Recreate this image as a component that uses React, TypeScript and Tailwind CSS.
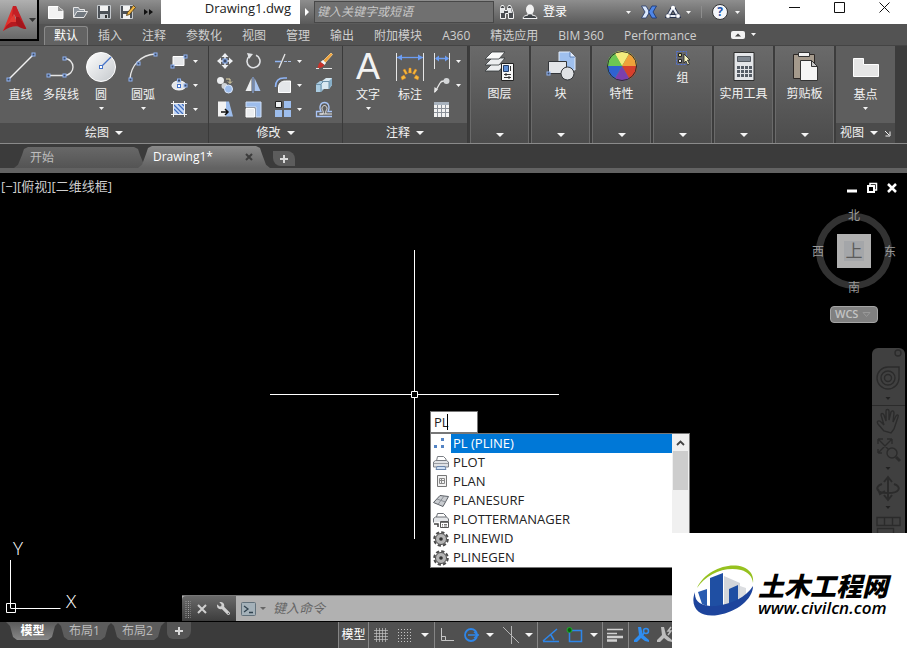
import { useState } from "react";
import type { ReactNode } from "react";
import { clsx } from "clsx";
import { FaWrench } from "react-icons/fa";

interface IconProps {
   w?: number;
   h?: number;
   className?: string;
   children: ReactNode;
}

function Icon({ w = 18, h = 18, className, children }: IconProps) {
   return (
      <svg
         width={w}
         height={h}
         viewBox={`0 0 ${w} ${h}`}
         fill="none"
         aria-hidden="true"
         className={clsx("shrink-0", className)}>
         {children}
      </svg>
   );
}

function Caret({ big = false, className }: { big?: boolean; className?: string }) {
   return big ? (
      <Icon w={8} h={4} className={className}>
         <path d="M0 0h8L4 4z" fill="#f4f4f4" />
      </Icon>
   ) : (
      <Icon w={5} h={3} className={className}>
         <path d="M0 0h5L2.5 3z" fill="#f4f4f4" />
      </Icon>
   );
}

// Small blue grip square, centred on x / y
function Grip({ x, y }: { x: number; y: number }) {
   return (
      <rect x={x - 1.5} y={y - 1.5} width="3" height="3" fill="#3d4a63" stroke="#8fb4f5" />
   );
}

/* ---------- Draw panel ---------- */

const lineIcon = (
   <Icon w={32} h={32}>
      <path d="M4 28L28 4" stroke="#f2f2f2" strokeWidth="1.4" />
      <Grip x={3.5} y={28.5} />
      <Grip x={28.5} y={3.5} />
   </Icon>
);

const polylineIcon = (
   <Icon w={32} h={32}>
      <path d="M3 24.5H19c12 0 12-17 0-17" stroke="#e6e6e6" strokeWidth="1.4" />
      <Grip x={3.5} y={24.5} />
      <Grip x={19.5} y={24.5} />
      <Grip x={19.5} y={7.5} />
   </Icon>
);

const circleIcon = (
   <Icon w={32} h={32}>
      <circle cx="16" cy="16" r="14.5" fill="url(#disc)" stroke="#fff" />
      <defs>
         <linearGradient id="disc" x1="0" y1="0" x2="1" y2="1">
            <stop offset="0" stopColor="#fff" />
            <stop offset="1" stopColor="#c4c8cc" />
         </linearGradient>
      </defs>
      <path d="M16 16L26 6" stroke="#4573c9" strokeWidth="1.3" />
      <rect x="14.5" y="14.5" width="3" height="3" fill="#fff" stroke="#4573c9" />
   </Icon>
);

const arcIcon = (
   <Icon w={32} h={32}>
      <path d="M3 28C4 14 14 4 28 3" stroke="#e6e6e6" strokeWidth="1.4" />
      <Grip x={3.5} y={28.5} />
      <Grip x={11.5} y={12.5} />
      <Grip x={28.5} y={3.5} />
   </Icon>
);

const rectIcon = (
   <Icon>
      <path d="M3 4.5h11v9H3z" fill="#e4e6e9" stroke="#fff" />
      <Grip x={2.5} y={14.5} />
      <Grip x={15.5} y={4.5} />
   </Icon>
);

const ellipseIcon = (
   <Icon>
      <ellipse cx="9" cy="9.5" rx="7" ry="4.5" fill="#e4e6e9" stroke="#fff" />
      <rect x="7.5" y="8.5" width="3" height="3" fill="#fff" stroke="#4573c9" />
      <Grip x={9} y={4.5} />
      <Grip x={15.5} y={9.5} />
   </Icon>
);

const hatchIcon = (
   <Icon>
      <path d="M4 4h10v10H4z" fill="#c3d6f5" />
      <path d="M4 9l5 5M4 5l9 9M8 4l6 6M12 4l2 2" stroke="#3f6dbd" strokeWidth="1.2" />
      <path d="M3.500 1v16M14.500 1v16M1 3.500h16M1 14.500h16" stroke="#f2f2f2" />
   </Icon>
);

/* ---------- Modify panel ---------- */

const moveIcon = (
   <Icon>
      <path d="M9 1l3.500 4h-7zM9 17l3.500-4h-7zM1 9l4-3.500v7zM17 9l-4-3.500v7z" fill="#eef0f3" />
      <path d="M9 3v4M9 11v4M3 9h4M11 9h4" stroke="#eef0f3" strokeWidth="1.500" />
      <rect x="7" y="7" width="4" height="4" fill="#3d4a63" stroke="#8fb4f5" />
   </Icon>
);

const rotateIcon = (
   <Icon>
      <path d="M5 4.500A6.500 6.500 0 1 0 12 3.200" stroke="#e0e2e5" strokeWidth="1.600" />
      <path d="M3 1l6 1-4 5z" fill="#e0e2e5" />
   </Icon>
);

const trimIcon = (
   <Icon>
      <path d="M1 9.500h6" stroke="#8fb4f5" strokeWidth="1.500" />
      <path d="M5 16l6-14" stroke="#e6e6e6" strokeWidth="1.300" />
      <path d="M10 9.500h8" stroke="#a9bde0" strokeWidth="1.200" strokeDasharray="3 1" />
   </Icon>
);

const eraseIcon = (
   <Icon>
      <path d="M16 1l1.500 1.500L10 11 8 9z" fill="#f0a13a" stroke="#f6cf8a" strokeWidth=".8" />
      <path d="M8 8l3 3-1.500 2-4-3z" fill="#f4f4f4" />
      <path d="M5.500 10l4 3c-2 2.500-4 3-7 3 1-3 1-5 3-6z" fill="#c9322a" />
      <path d="M1 16.500h3M8 16.500h9" stroke="#e6e6e6" />
   </Icon>
);

const copyIcon = (
   <Icon>
      <circle cx="4.500" cy="4.500" r="3.500" fill="#eceef0" />
      <circle cx="8.500" cy="10" r="3" fill="#d0d4d8" />
      <circle cx="12.500" cy="13" r="4" fill="#9dbdec" stroke="#dbe7fa" />
      <path d="M10 3h4v4M12 5.500l2 2 2-2" stroke="#e6d9a8" />
   </Icon>
);

const mirrorIcon = (
   <Icon>
      <path d="M7.500 2v13H1.500z" fill="#eceef0" />
      <path d="M10.500 2v13h6z" fill="#a9c4ee" />
      <path d="M9 1v16" stroke="#8fb4f5" />
   </Icon>
);

const filletIcon = (
   <Icon>
      <path d="M4.500 16.500V12c0-5 3-7 7-7h5v11.500z" fill="#e4e6e9" stroke="#fff" />
      <path d="M1.500 11C1.500 5 5 2 10 2h3" stroke="#8fb4f5" strokeWidth="1.600" />
   </Icon>
);

const explodeIcon = (
   <Icon>
      <path d="M1 8l4-3h4v8l-3 3H1z" fill="#a9cbe0" />
      <path d="M7 5l4-3h6v7l-3 4H7z" fill="#d9e9f2" />
      <path d="M14 5l3-3v7l-3 4z" fill="#86aec8" />
      <path d="M1 8.500h5V16M7 5.500h7V13M6 8l2-2" stroke="#6d93ab" />
   </Icon>
);

const stretchIcon = (
   <Icon>
      <path d="M2 1.500h8v15H2z" fill="#f2f2f2" />
      <path d="M10 1.500h3l4 15h-7z" fill="#9dbdec" />
      <path d="M5 12h6M9 9l3 3-3 3" stroke="#111" strokeWidth="1.500" />
   </Icon>
);

const scaleIcon = (
   <Icon>
      <path d="M2 2h15v15h-5V7H2z" fill="#9dbdec" stroke="#cfdff7" />
      <path d="M2 8.500h8.500V17H2z" fill="#eceef0" stroke="#fff" />
   </Icon>
);

const arrayIcon = (
   <Icon>
      <path d="M1.500 1.500h6v6h-6z" fill="#eceef0" stroke="#222" />
      <path d="M10 1h7v7h-7zM1 10h7v7H1zM10 10h7v7h-7z" fill="#9dbdec" />
   </Icon>
);

const offsetIcon = (
   <Icon>
      <path
         d="M17 16.500H1.500v-5H6C3.500 6 6 2.500 9.500 2.500S15.500 6 13 11.500h4"
         stroke="#a9c4f5"
         strokeWidth="1.300"
      />
      <path
         d="M17 14H4.500M4.500 14H8c1-3-1-4-1-5.500S8.200 5.500 9.500 5.500 12 7 12 8.500 10 11 11 14"
         stroke="#e8e8e8"
      />
   </Icon>
);

/* ---------- Annotation panel ---------- */

const dimensionIcon = (
   <Icon w={32} h={32}>
      <path d="M2.500 2v28M29.500 2v28" stroke="#e6e6e6" />
      <path d="M3 6.500h26" stroke="#6c9df2" strokeWidth="1.300" />
      <path d="M3 6.500l5-3v6zM29 6.500l-5-3v6z" fill="#6c9df2" />
      <path
         d="M15 17h2l.5 5h-3zM9 19l2-1 2.500 4.500-2 1zM23 19l-2-1-2.500 4.500 2 1zM7 26l3-2 2 3-4 2zM25 26l-3-2-2 3 4 2z"
         fill="#f6b93b"
         stroke="#e0801c"
         strokeWidth=".4"
      />
   </Icon>
);

const linearIcon = (
   <Icon>
      <path d="M1.500 1v16M16.500 1v16" stroke="#e6e6e6" />
      <path d="M3 6.500h12" stroke="#6c9df2" strokeWidth="1.500" />
      <path d="M2 6.500l4-3v6zM16 6.500l-4-3v6z" fill="#6c9df2" />
   </Icon>
);

const leaderIcon = (
   <Icon>
      <path d="M2 16l5-9c1-2 2-2 4-2" stroke="#e6e6e6" strokeWidth="1.300" />
      <path d="M1 17l.5-6 3.500 2.500z" fill="#e6e6e6" />
      <circle cx="13.500" cy="5" r="3" fill="#d4d6d8" />
   </Icon>
);

const tableIcon = (
   <Icon>
      <path d="M1 2h15v15H1z" fill="#f2f2f2" />
      <path d="M1 2h15v3H1z" fill="#a8b2bd" />
      <path d="M1 8.500h15M1 12.500h15M4.500 5v12M8.500 5v12M12.500 5v12" stroke="#8a9098" />
   </Icon>
);

/* ---------- Collapsed panels ---------- */

const layersIcon = (
   <Icon w={32} h={32}>
      <path d="M8 14h13l-6 7H1z" fill="#eceef0" stroke="#34373a" strokeWidth=".8" />
      <path d="M8 8h13l-6 7H1z" fill="#eceef0" stroke="#34373a" strokeWidth=".8" />
      <path d="M8 2h13l-6 7H1z" fill="#fafafa" stroke="#34373a" strokeWidth=".8" />
      <path d="M17.500 13.500h12v17h-12z" fill="#f7f7f7" stroke="#222" />
      <path d="M19.500 15.500h5v6h-5z" fill="#5e8fd6" stroke="#223c66" />
      <path d="M26.500 16v5M20 24.500h7M20 27.500h7M22 23v3M25 26v3" stroke="#333" />
   </Icon>
);

const blockIcon = (
   <Icon w={32} h={32}>
      <path d="M14 2h11l5 5v13H14z" fill="#9fc0ee" stroke="#e3edfb" />
      <path d="M25 2v5h5" fill="#dfeafb" stroke="#4a6fa8" strokeWidth=".8" />
      <path d="M3.500 11.500h18v12h-18z" fill="#e4e6e9" stroke="#33363a" />
      <circle cx="22.500" cy="23.500" r="6.500" fill="#dfe1e4" stroke="#33363a" />
      <Grip x={3.5} y={23.5} />
   </Icon>
);

const wheelIcon = (
   <Icon w={32} h={32}>
      <circle cx="16" cy="16" r="15" fill="#53b848" />
      <path d="M16 16L8.500 3a15 15 0 0 1 15 0z" fill="#f3ec7c" />
      <path d="M16 16l7.500-13A15 15 0 0 1 31 16z" fill="#f0a23a" />
      <path d="M16 16h15a15 15 0 0 1-7.500 13z" fill="#d8402c" />
      <path d="M16 16l7.500 13a15 15 0 0 1-15 0z" fill="#7b3fae" />
      <path d="M16 16L8.500 29A15 15 0 0 1 1 16z" fill="#2f62d0" />
      <path d="M16 16H1A15 15 0 0 1 8.500 3z" fill="#6cc653" />
      <circle cx="16" cy="16" r="14.500" stroke="#2d2d2d" />
   </Icon>
);

const groupIcon = (
   <Icon w={16} h={16}>
      <path d="M1.500 1.500h10v13h-10z" stroke="#5273d6" strokeDasharray="2 1" />
      <path d="M3.500 3.500h3v3h-3z" fill="#e6e08a" stroke="#222" />
      <path d="M3.500 9.500h3v3h-3z" fill="#e4e4e4" stroke="#222" />
      <path d="M9 4v9l2-2 1.500 4 2-1-2-4H15z" fill="#f7f4c0" stroke="#222" strokeWidth=".8" />
   </Icon>
);

const calcIcon = (
   <Icon w={32} h={32}>
      <path d="M6 2.500h20v28H6z" fill="#e4e6e9" stroke="#2d2d2d" />
      <path d="M9.500 6.500h13v5h-13z" fill="#7f8790" stroke="#555b62" />
      <path
         d="M9 16h3v3H9zM13 16h3v3h-3zM17 16h3v3h-3zM21 16h3v3h-3zM9 20h3v3H9zM13 20h3v3h-3zM17 20h3v3h-3zM21 20h3v3h-3zM9 24h3v3H9zM13 24h3v3h-3zM17 24h3v3h-3zM21 24h3v3h-3z"
         fill="#565d66"
      />
   </Icon>
);

const clipboardIcon = (
   <Icon w={32} h={32}>
      <path d="M4.500 4.500h21v24h-21z" fill="#a59a8c" stroke="#2d2826" />
      <path d="M9.500 2.500h11v4h-11z" fill="#f2f2f2" stroke="#333" />
      <path d="M11.500 10.500h11l6 6v14h-17z" fill="#f5f5f5" stroke="#333" />
      <path d="M22.500 10.500v6h6z" fill="#c8c8c8" stroke="#333" />
   </Icon>
);

const baseIcon = (
   <Icon w={32} h={32}>
      <path d="M3.500 7.500h10v6h15v12h-25z" fill="#e6e6e6" stroke="#fff" />
   </Icon>
);

/* ---------- Command suggestions ---------- */

const dotsIcon = (
   <Icon w={16} h={16}>
      <path d="M8 2h3v3H8zM1 9h3v3H1zM8 9h3v3H8z" fill="#5484c4" />
   </Icon>
);

const printerIcon = (
   <Icon w={16} h={16}>
      <path d="M3.500 6l1-4.500h6L13 4v2" fill="#fff" stroke="#7b7f85" />
      <path d="M.5 7l2-1.500h11l2 1.500v5H.5z" fill="#e0e2e5" stroke="#7b7f85" />
      <path d="M1 8.500h14" stroke="#9a9ea4" />
      <path d="M4 11.500h8l1 3H3z" fill="#cfe0f5" stroke="#6b86ab" />
   </Icon>
);

const planIcon = (
   <Icon w={16} h={16}>
      <path d="M4.500 1.500h9v11h-9z" fill="#f2f2f2" stroke="#777" />
      <path d="M6.500 4.500h5v5h-5zM6.500 6.500h5M8.500 5v4" stroke="#888" />
   </Icon>
);

const surfaceIcon = (
   <Icon w={16} h={16}>
      <path d="M.5 9.500L7 2.500l8.500 1L10 13.500z" fill="#c9ccd0" stroke="#5c6066" />
      <path d="M4 6l8.500 3M11 3L5 11.500" stroke="#8b9097" />
   </Icon>
);

const plotterIcon = (
   <Icon w={16} h={16}>
      <path d="M3.500 5l1-3.500h6L13 4v1" fill="#fff" stroke="#6b6f75" />
      <path d="M.5 10.500v-4l2-1.500h11l2 2v2" fill="#e4e6e9" stroke="#6b6f75" />
      <path d="M1 12h4v3" stroke="#444" strokeWidth="1.500" />
      <path d="M7.500 9.500h8v6h-8z" fill="#fff" stroke="#555" />
      <path d="M8 10.500h7M9 12.500h1M11 12.500h3M9 14h1M11 14h3" stroke="#777" />
   </Icon>
);

const gearIcon = (
   <Icon w={16} h={16}>
      <circle
         cx="8"
         cy="8"
         r="6.800"
         stroke="#4c4c4c"
         strokeWidth="2"
         strokeDasharray="3.300 2.040"
      />
      <circle cx="8" cy="8" r="5.500" fill="#b4b4b4" stroke="#4c4c4c" />
      <circle cx="8" cy="8" r="1.800" fill="#333" />
   </Icon>
);

const suggestions = [
   { label: "PL (PLINE)", icon: dotsIcon },
   { label: "PLOT", icon: printerIcon },
   { label: "PLAN", icon: planIcon },
   { label: "PLANESURF", icon: surfaceIcon },
   { label: "PLOTTERMANAGER", icon: plotterIcon },
   { label: "PLINEWID", icon: gearIcon },
   { label: "PLINEGEN", icon: gearIcon },
];

const ribbonTabs = [
   "默认",
   "插入",
   "注释",
   "参数化",
   "视图",
   "管理",
   "输出",
   "附加模块",
   "A360",
   "精选应用",
   "BIM 360",
   "Performance",
];

const collapsedPanels = [
   { label: "图层", icon: layersIcon },
   { label: "块", icon: blockIcon },
   { label: "特性", icon: wheelIcon },
   { label: "组", icon: groupIcon },
   { label: "实用工具", icon: calcIcon },
   { label: "剪贴板", icon: clipboardIcon },
];

const barGradient = "bg-linear-to-b from-[#8e8e8e] to-[#5a5a5a]";

function TitleBar() {
   return (
      <div className={clsx("flex h-6 items-stretch", barGradient)}>
         <div className="flex items-center gap-2 pr-2 pl-[9px]">
            <button aria-label="新建">
               <Icon w={16} h={14}>
                  <path d="M.5 1.500H10l5 4v8H.5z" fill="#f2f2f2" stroke="#fff" />
                  <path d="M10 1v5h5z" fill="#9a9a9a" />
               </Icon>
            </button>
            <button aria-label="打开">
               <Icon w={16} h={14}>
                  <path d="M1.500 12V2.500h5l1 2h5V7" fill="#8c949c" stroke="#e8e8e8" />
                  <path d="M1.500 12.500L5 6.500h10.500L12 12.500z" fill="#70777e" stroke="#e8e8e8" />
               </Icon>
            </button>
            <button aria-label="保存">
               <Icon w={16} h={14}>
                  <path d="M1.500.5h13v13h-13z" fill="#4c5157" stroke="#c4c8cc" />
                  <path d="M4 1h8v5H4z" fill="#f2f2f2" />
                  <path d="M4 9h8v5H4z" fill="#c8ccd0" />
                  <path d="M9 10h2v3H9z" fill="#333" />
               </Icon>
            </button>
            <button aria-label="另存为">
               <Icon w={16} h={14}>
                  <path d="M.5.5h12v13H.5z" fill="#4c5157" stroke="#c4c8cc" />
                  <path d="M3 1h7v5H3zM3 9h7v5H3z" fill="#f2f2f2" />
                  <path d="M13.500.5l2 2-6 7-3 1 1-3z" fill="#f0b545" stroke="#4a3510" strokeWidth=".8" />
               </Icon>
            </button>
            <button aria-label="更多">
               <Icon w={9} h={6}>
                  <path d="M0 0l4 3-4 3zM5 0l4 3-4 3z" fill="#111" />
               </Icon>
            </button>
         </div>
         <h1 className="w-[139px] bg-white pr-[9px] text-right text-[13px] leading-4 text-[#222]">
            Drawing1.dwg
         </h1>
         <div className="flex w-[14px] items-center justify-center">
            <Icon w={4} h={8}>
               <path d="M0 0l4 4-4 4z" fill="#fff" />
            </Icon>
         </div>
         <input
            aria-label="搜索"
            placeholder="键入关键字或短语"
            className="my-px w-[180px] border border-[#484848] bg-[#707070] px-[2px] text-xs italic outline-none placeholder:text-[#c8c8c8]"
         />
         <div className="flex flex-1 items-center pr-[5px] pl-1">
            <Icon w={16} h={16}>
               <path d="M2.500 3.500l1-2h2l1 2v3h3v-3l1-2h2l1 2 2 6v5h-5v-5h-3v5h-5v-5z" fill="#4a4d51" stroke="#f4f4f4" />
               <path d="M3 4h3v5H2zM10 4h3l1 5h-4z" fill="#e6e8ea" />
            </Icon>
            <Icon w={16} h={16} className="ml-2">
               <path d="M1 14.500c0-2 2-3 5-3.500v-2h4v2c3 .5 5 1.500 5 3.500z" fill="#3f4347" stroke="#f4f4f4" />
               <ellipse cx="8" cy="5.500" rx="4" ry="5" fill="#f2f2f2" />
            </Icon>
            <button className="ml-[5px] text-xs text-white">登录</button>
            <Caret className="mr-[10px] ml-auto" />
            <Icon w={16} h={14}>
               <path d="M.5 1H5l3.500 6L5 13H.5L4 7z" fill="#dbe8fc" stroke="#22376b" strokeWidth=".8" />
               <path d="M15.500 1H11L7.500 7l3.500 6h4.500L12 7z" fill="#4f86e6" stroke="#17306b" strokeWidth=".8" />
            </Icon>
            <Icon w={16} h={14} className="ml-2">
               <path d="M8 2.500l5 8.500H3z" stroke="#26304a" strokeWidth="4" />
               <path d="M8 2.500l5 8.500H3z" stroke="#e8edf6" strokeWidth="2.200" />
               <circle cx="8" cy="2.500" r="2" fill="#fff" />
               <circle cx="3" cy="11" r="2.300" fill="#fff" stroke="#3a4560" strokeWidth=".6" />
               <circle cx="13" cy="11" r="2.300" fill="#fff" stroke="#3a4560" strokeWidth=".6" />
            </Icon>
            <Caret className="ml-[5px]" />
            <span className="mx-[10px] h-3 w-px bg-[#8d8d8d]" />
            <button
               aria-label="帮助"
               className="flex size-4 items-center justify-center rounded-full border border-[#333] bg-[#f4f6fa] text-xs font-bold text-[#2453a8]">
               ?
            </button>
            <Caret className="ml-[7px]" />
         </div>
         <div className="flex bg-white pl-[27px] text-[#111]">
            <button aria-label="最小化" className="flex w-[45px] justify-center pt-[2px]">
               <Icon w={11} h={11}>
                  <path d="M0 5.500h11" stroke="currentColor" />
               </Icon>
            </button>
            <button aria-label="最大化" className="flex w-[45px] justify-center pt-[2px]">
               <Icon w={11} h={11}>
                  <path d="M.5.5h10v10H.5z" stroke="currentColor" />
               </Icon>
            </button>
            <button aria-label="关闭" className="flex w-[45px] justify-center pt-[2px]">
               <Icon w={11} h={11}>
                  <path d="M.5.5l10 10M10.500.5l-10 10" stroke="currentColor" />
               </Icon>
            </button>
         </div>
      </div>
   );
}

function Header() {
   const [active, setActive] = useState("默认");

   return (
      <header className="flex bg-[#535353]">
         <button
            aria-label="应用程序菜单"
            className="flex h-[41px] w-[39px] shrink-0 items-center gap-px border-r-2 border-b-2 border-black bg-linear-to-b from-[#b0b0b0] to-[#686868] pl-[2px]">
            <Icon w={26} h={28}>
               <path d="M11 0h3l5 13-5-2-2-3-7 14-4 3z" fill="#e0302b" />
               <path d="M11 0h3l10 22-4-1-8-13-2 4z" fill="#c41f25" />
               <path d="M12 8l-7 11-4 6c3-3 7-5 11-5l3-3z" fill="#e23a33" />
               <path d="M9 16h7l3 5c-6-2-12 0-18 4l4-6z" fill="#b5191f" />
               <path d="M14 11l3 0 7 11c1 1-1 2-7-1l-3-4z" fill="#a3151b" />
            </Icon>
            <Icon w={7} h={4}>
               <path d="M0 0h7L3.500 4z" fill="#333" />
            </Icon>
         </button>
         <div className="min-w-0 flex-1">
            <TitleBar />
            <nav className="flex h-[21px] items-stretch pl-[5px]">
               {ribbonTabs.map((tab) => (
                  <button
                     key={tab}
                     onClick={() => setActive(tab)}
                     className={clsx(
                        "text-xs whitespace-nowrap",
                        tab === active
                           ? "mt-[2px] rounded-t-[3px] border border-b-0 border-[#8a8a8a] bg-[#636363] px-[9px] text-white"
                           : "px-[10px] pt-[2px] text-[#cfcfcf]"
                     )}>
                     {tab}
                  </button>
               ))}
               <button aria-label="最小化功能区" className="ml-6 flex items-center gap-[6px]">
                  <Icon w={14} h={9}>
                     <rect width="14" height="8" rx="2" y="1" fill="#f2f2f2" />
                     <path d="M4 6.500h6L7 3.500z" fill="#444" />
                  </Icon>
                  <Caret />
               </button>
            </nav>
         </div>
      </header>
   );
}

interface BigButtonProps {
   icon: ReactNode;
   label: string;
   caret?: boolean;
   className: string;
}

function BigButton({ icon, label, caret, className }: BigButtonProps) {
   return (
      <button className={clsx("flex flex-col items-center pt-[2px]", className)}>
         {icon}
         <span className="mt-1 leading-4 whitespace-nowrap">{label}</span>
         {caret && <Caret className="mt-1" />}
      </button>
   );
}

function SmallButton({ icon, label, caret }: { icon: ReactNode; label: string; caret?: boolean }) {
   return (
      <button aria-label={label} className="flex h-6 items-center gap-[5px]">
         {icon}
         {caret && <Caret />}
      </button>
   );
}

function Panel({ title, children }: { title: string; children: ReactNode }) {
   return (
      <section className="flex flex-col border-r border-[#3a3a3a] bg-[#5e5e5e]">
         <div className="flex flex-1 items-start pt-[3px]">{children}</div>
         <button className="flex h-5 items-center justify-center gap-[6px] bg-[#4b4b4b]">
            {title}
            <Caret big />
         </button>
      </section>
   );
}

function Ribbon() {
   return (
      <div className="flex h-[98px] items-stretch border-t border-[#444] bg-[#3c3c3c] text-xs text-[#f2f2f2]">
         <Panel title="绘图">
            <BigButton icon={lineIcon} label="直线" className="w-[41px]" />
            <BigButton icon={polylineIcon} label="多段线" className="w-10" />
            <BigButton icon={circleIcon} label="圆" caret className="w-10" />
            <BigButton icon={arcIcon} label="圆弧" caret className="w-[44px]" />
            <div className="flex flex-col pr-[10px] pl-[5px]">
               <SmallButton icon={rectIcon} label="矩形" caret />
               <SmallButton icon={ellipseIcon} label="椭圆" caret />
               <SmallButton icon={hatchIcon} label="图案填充" caret />
            </div>
         </Panel>
         <Panel title="修改">
            <div className="grid grid-cols-[28px_30px_41px_18px] pr-[9px] pl-[7px]">
               <SmallButton icon={moveIcon} label="移动" />
               <SmallButton icon={rotateIcon} label="旋转" />
               <SmallButton icon={trimIcon} label="修剪" caret />
               <SmallButton icon={eraseIcon} label="删除" />
               <SmallButton icon={copyIcon} label="复制" />
               <SmallButton icon={mirrorIcon} label="镜像" />
               <SmallButton icon={filletIcon} label="圆角" caret />
               <SmallButton icon={explodeIcon} label="分解" />
               <SmallButton icon={stretchIcon} label="拉伸" />
               <SmallButton icon={scaleIcon} label="缩放" />
               <SmallButton icon={arrayIcon} label="阵列" caret />
               <SmallButton icon={offsetIcon} label="偏移" />
            </div>
         </Panel>
         <Panel title="注释">
            <BigButton
               icon={
                  <span className="h-8 font-['Liberation_Sans'] text-[36px] leading-8">A</span>
               }
               label="文字"
               caret
               className="ml-1 w-[42px]"
            />
            <BigButton icon={dimensionIcon} label="标注" className="w-[42px]" />
            <div className="flex flex-col pr-[6px] pl-[2px]">
               <SmallButton icon={linearIcon} label="线性" caret />
               <SmallButton icon={leaderIcon} label="引线" caret />
               <SmallButton icon={tableIcon} label="表格" />
            </div>
         </Panel>
         {collapsedPanels.map((panel) => (
            <button
               key={panel.label}
               className="ml-[2px] flex w-[59px] flex-col items-center border-x border-[#6a6a6a] bg-linear-to-b from-[#6a6a6a] to-[#4c4c4c] pt-1 pb-[6px]">
               {panel.icon}
               <span className="mt-1 leading-4 whitespace-nowrap">{panel.label}</span>
               <Caret big className="mt-auto" />
            </button>
         ))}
         <section className="ml-[2px] flex flex-col bg-[#5e5e5e]">
            <div className="flex flex-1 justify-center pt-[3px]">
               <BigButton icon={baseIcon} label="基点" caret className="w-[59px]" />
            </div>
            <button className="flex h-5 items-center justify-center gap-[6px] bg-[#4b4b4b]">
               视图
               <Caret big />
               <Icon w={7} h={7}>
                  <path d="M1 1l4 4M6 1.500v4.500H1.500" stroke="#f2f2f2" />
               </Icon>
            </button>
         </section>
      </div>
   );
}

const docTabShape =
   "[clip-path:polygon(0_100%,4px_85%,8px_8px,10px_2px,14px_0,calc(100%-14px)_0,calc(100%-10px)_2px,calc(100%-8px)_8px,calc(100%-4px)_85%,100%_100%)]";

function DocumentTabs() {
   return (
      <div className="flex h-[30px] flex-col border-t border-[#8a8a8a] bg-[#3b3b3b] text-xs">
         <div className="flex flex-1 items-end pl-[14px]">
            <button
               className={clsx(
                  "h-[21px] w-[134px] bg-linear-to-b from-[#686868] to-[#545454] pl-4 text-left text-[#bdbdbd]",
                  docTabShape
               )}>
               开始
            </button>
            <div
               className={clsx(
                  "-ml-[10px] flex h-[22px] w-[132px] items-center justify-between bg-linear-to-b from-[#8a8a8a] to-[#626262] pr-[17px] pl-[15px] text-white",
                  docTabShape
               )}>
               <button>Drawing1*</button>
               <button aria-label="关闭图形">
                  <Icon w={8} h={8}>
                     <path d="M1 1l6 6M7 1L1 7" stroke="#3c3c3c" strokeWidth="2" />
                  </Icon>
               </button>
            </div>
            <button
               aria-label="新图形"
               className="mb-[2px] ml-[3px] flex h-[15px] w-[22px] items-center justify-center rounded-tr-lg rounded-bl-lg bg-[#5c5c5c]">
               <Icon w={8} h={8}>
                  <path d="M4 0v8M0 4h8" stroke="#d8d8d8" strokeWidth="2" />
               </Icon>
            </button>
         </div>
         <div className="h-[5px] bg-[#626262]" />
      </div>
   );
}

function ViewCube() {
   return (
      <div className="absolute top-[7px] right-[9px] flex w-[88px] flex-col items-center">
         <div className="mb-[9px] flex gap-2 self-end">
            <button aria-label="最小化视口">
               <Icon w={12} h={16}>
                  <path d="M1 11h10" stroke="#fff" strokeWidth="3" />
               </Icon>
            </button>
            <button aria-label="还原视口">
               <Icon w={12} h={16}>
                  <path d="M4 5V3.500h6.500V10H9" stroke="#fff" strokeWidth="1.500" />
                  <path d="M2 6h6v6H2z" stroke="#fff" strokeWidth="2" />
               </Icon>
            </button>
            <button aria-label="关闭视口">
               <Icon w={12} h={16}>
                  <path d="M2 4l8 8M10 4l-8 8" stroke="#fff" strokeWidth="2.500" />
               </Icon>
            </button>
         </div>
         <svg width="88" height="94" viewBox="-1 -4 88 94" role="img" aria-label="ViewCube">
            <circle cx="43" cy="42" r="34.500" fill="none" stroke="#323232" strokeWidth="7" />
            <g fill="#999" fontSize="12" textAnchor="middle">
               <text x="43" y="11">北</text>
               <text x="43" y="83">南</text>
               <text x="7" y="47">西</text>
               <text x="79" y="47">东</text>
            </g>
            <rect x="26" y="25" width="34" height="34" fill="#b0b0b0" />
            <rect x="33" y="32" width="20" height="20" fill="#a4a6a9" />
            <text x="43" y="48" fontSize="17" textAnchor="middle" fill="#5c5c5c">上</text>
         </svg>
         <button className="mt-[7px] flex h-[17px] w-12 items-center gap-1 rounded-[4px] border border-[#a5a5a5] bg-[#808080] pl-1 text-[11px] font-semibold text-[#c4c4c4]">
            WCS
            <Icon w={9} h={5}>
               <path d="M1 .5h7L4.500 4.500z" stroke="#999" />
            </Icon>
         </button>
      </div>
   );
}

function NavigationBar() {
   return (
      <div className="absolute top-[175px] right-[2px] bottom-12 flex w-[33px] flex-col items-center overflow-hidden rounded-t-md bg-[#404040]">
         <Icon w={33} h={240}>
            <g stroke="#2b2b2b" strokeWidth="1.400">
               <circle cx="26" cy="5" r="3" />
               <path d="M16 19h11v11a11 11 0 1 1-11-11z" />
               <circle cx="16" cy="30" r="7" />
               <circle cx="16" cy="30" r="3.500" />
               <path d="M0 57.500h33" strokeWidth="1" />
               <path d="M12 83l-6-7c-2-3 1-4 3-2l3 3-3-10c0-2 2-2 3 0l2 6V63c0-2 3-2 3 0v9l2-8c1-2 3-1 3 1l-1 9 3-6c1-2 3-1 2 1l-4 12-3 4z" />
               <path d="M6 91l13 13M6 91h5M6 91v5M20 91L6 105M20 91h-5M20 91v5M6 105h4M6 105v-4" />
               <circle cx="20" cy="105" r="5" fill="#404040" />
               <path d="M24 109l4 4" strokeWidth="3" />
               <path d="M16 130v21M12 134l4-5 4 5M12 147l4 5 4-5" strokeWidth="2" />
               <path d="M10 136c-8 3-6 9 6 9s14-6 6-9M6 141l2 5 5-3" strokeWidth="2" />
               <path d="M5 169.500h23v8H5zM12.500 170v8M20.500 170v8M5.500 180.500h16v10h-16z" />
            </g>
            <path d="M13.500 49h5l-2.500 3zM13.500 119h5l-2.500 3zM13.500 158h5l-2.500 3z" fill="#222" />
         </Icon>
      </div>
   );
}

function CommandPopup() {
   const [value, setValue] = useState("PL");
   const [selected, setSelected] = useState(0);

   return (
      <div className="absolute top-[238px] left-[430px] w-[260px] text-[13px] text-[#222]">
         <div className="relative w-12">
            <input
               aria-label="动态输入"
               value={value}
               onChange={(e) => setValue(e.target.value)}
               className="block h-[22px] w-full border border-[#777] bg-white px-[3px] outline-none"
            />
            <span className="absolute top-[3px] left-[17px] h-4 w-px bg-black" />
         </div>
         <div className="flex border border-[#777] bg-white">
            <ul role="listbox" aria-label="命令建议" className="flex-1">
               {suggestions.map((item, index) => (
                  <li
                     key={item.label}
                     role="option"
                     aria-selected={index === selected}
                     onClick={() => setSelected(index)}
                     className="flex h-[19px] items-center pl-[2px]">
                     {item.icon}
                     <span
                        className={clsx(
                           "ml-[2px] flex-1 pl-[2px] leading-[19px]",
                           index === selected && "bg-[#0078d7] text-white"
                        )}>
                        {item.label}
                     </span>
                  </li>
               ))}
            </ul>
            <div className="flex w-[17px] flex-col items-center bg-[#f0f0f0]">
               <button aria-label="向上滚动" className="flex h-[17px] items-center">
                  <Icon w={9} h={6}>
                     <path d="M1 5l3.500-3.500L8 5" stroke="#444" strokeWidth="1.800" />
                  </Icon>
               </button>
               <div className="h-[39px] w-[15px] bg-[#cdcdcd]" />
            </div>
         </div>
      </div>
   );
}

function CommandLine() {
   return (
      <div className="absolute right-0 bottom-px left-[182px] flex h-[26px] items-stretch border-t border-[#777] bg-[#b1b1b1]">
         <div className="flex w-[54px] items-center gap-[6px] rounded-tl bg-linear-to-b from-[#6a6a6a] to-[#3d3d3d] pl-[3px]">
            <Icon w={6} h={18}>
               <path
                  d="M1 1v17M3.500 1v17M6 1v17"
                  stroke="#9d9d9d"
                  strokeWidth="1"
                  strokeDasharray="1 1"
               />
            </Icon>
            <button aria-label="关闭命令行">
               <Icon w={10} h={10}>
                  <path d="M1 1l8 8M9 1L1 9" stroke="#d0d0d0" strokeWidth="2" />
               </Icon>
            </button>
            <button aria-label="自定义" className="pl-1">
               <FaWrench size={13} color="#d0d0d0" className="-scale-x-100" />
            </button>
         </div>
         <button aria-label="最近使用的命令" className="flex items-center gap-1 pl-[5px]">
            <Icon w={15} h={14}>
               <rect x=".5" y=".5" width="14" height="13" rx="1" fill="#a4b1b9" stroke="#62717b" />
               <path d="M3 4l4 3-4 3M8 10.500h4" stroke="#30424e" strokeWidth="1.300" />
            </Icon>
            <Icon w={6} h={3}>
               <path d="M0 0h6L3 3z" fill="#666" />
            </Icon>
         </button>
         <input
            aria-label="命令"
            placeholder="键入命令"
            className="min-w-0 flex-1 bg-transparent pl-[7px] text-[13px] italic outline-none placeholder:text-[#666]"
         />
      </div>
   );
}

function Canvas() {
   return (
      <main className="relative min-h-[449px] flex-1 overflow-hidden bg-black">
         <div className="flex pt-1 pl-px text-[13px] text-[#cfcfcf]">
            <button>[−]</button>
            <button>[俯视]</button>
            <button>[二维线框]</button>
         </div>

         {/* Crosshair */}
         <svg
            width="289"
            height="289"
            viewBox="0 0 289 289"
            aria-hidden="true"
            className="absolute top-[77px] left-[270px]">
            <path
               d="M144.500 0v141M144.500 148v141M0 144.500h141M148 144.500h141M141.500 141.500h6v6h-6z"
               fill="none"
               stroke="#fff"
            />
         </svg>

         {/* UCS axes */}
         <svg
            width="84"
            height="88"
            viewBox="0 -8 84 88"
            aria-hidden="true"
            className="absolute bottom-1 left-0">
            <path d="M10.500 22v48M10.500 70.500h50M6.500 65.500h9v9h-9z" fill="none" stroke="#fff" />
            <g fill="#fff" fontSize="19" fontWeight="300" textAnchor="middle">
               <text x="18" y="17">Y</text>
               <text x="71" y="70">X</text>
            </g>
         </svg>

         <ViewCube />
         <NavigationBar />
         <CommandLine />
         <CommandPopup />
      </main>
   );
}

const layoutTabShape =
   "[clip-path:polygon(0_0,100%_0,calc(100%-4px)_4px,calc(100%-7px)_15px,calc(100%-11px)_100%,11px_100%,7px_15px,4px_4px)]";

const statusGroup = "flex items-center border-l border-[#858585] bg-[#505050]";

function StatusBar() {
   return (
      <footer className="flex h-[26px] items-stretch bg-[#3b3b3b] text-xs">
         <div className="flex items-start pl-[6px]">
            {["模型", "布局1", "布局2"].map((name, index) => (
               <button
                  key={name}
                  className={clsx(
                     "-mr-[2px] h-[18px]",
                     layoutTabShape,
                     index === 0
                        ? "w-[53px] bg-linear-to-b from-[#5a5a5a] to-[#888] font-bold text-white"
                        : "w-[55px] bg-[#5c5c5c] text-[#bcbcbc]"
                  )}>
                  {name}
               </button>
            ))}
            <button
               aria-label="新建布局"
               className="ml-1 flex h-[17px] w-6 items-center justify-center rounded-br-lg rounded-bl-md bg-[#555]">
               <Icon w={8} h={8}>
                  <path d="M4 0v8M0 4h8" stroke="#d8d8d8" strokeWidth="2" />
               </Icon>
            </button>
         </div>
         <div className="ml-auto flex min-w-0 shrink-0 basis-[569px] items-stretch overflow-hidden bg-[#505050]">
            <button className={clsx(statusGroup, "w-[30px] justify-center text-white")}>模型</button>
            <div className={clsx(statusGroup, "gap-2 pr-[5px] pl-1")}>
               <Icon w={16} h={16}>
                  <path
                     d="M3.500 1v14M6.500 1v14M9.500 1v14M12.500 1v14M1 3.500h14M1 6.500h14M1 9.500h14M1 12.500h14"
                     stroke="#c4c4c4"
                     strokeWidth=".7"
                  />
               </Icon>
               <Icon w={16} h={16}>
                  <path
                     d="M1 2.500h14M1 5.500h14M1 8.500h14M1 11.500h14M1 14.500h14"
                     stroke="#c4c4c4"
                     strokeDasharray="1 2"
                  />
               </Icon>
               <Caret big />
            </div>
            <div className={clsx(statusGroup, "pr-1 pl-1")}>
               <Icon w={16} h={16}>
                  <path d="M2.500 1v12.500H15M2.500 9.500h4v4" stroke="#c4c4c4" />
               </Icon>
               <Icon w={17} h={16} className="ml-2">
                  <circle cx="8" cy="8" r="6" stroke="#2f86e8" strokeWidth="1.800" />
                  <path d="M5 8h11M11 5l4 3-4 3" stroke="#2f86e8" strokeWidth="1.500" />
               </Icon>
               <Caret big className="ml-[6px]" />
               <Icon w={18} h={18} className="ml-2">
                  <path d="M1 1l16 16M9.500 0v18" stroke="#b4b4b4" />
               </Icon>
               <Caret big className="ml-[5px]" />
            </div>
            <div className={clsx(statusGroup, "gap-[6px] pr-1 pl-1")}>
               <Icon w={18} h={16}>
                  <path d="M1 14L15 2M1 14.500h16M9 8l3 5" stroke="#2f86e8" strokeWidth="1.600" />
               </Icon>
               <Icon w={18} h={16}>
                  <path d="M3.500 3.500h12v11h-12z" stroke="#2f86e8" strokeWidth="1.500" />
                  <circle cx="3.500" cy="3" r="2.500" fill="#0b5c12" stroke="#1fae2c" />
               </Icon>
               <Caret big />
            </div>
            <div className={clsx(statusGroup, "pr-[5px] pl-1")}>
               <Icon w={16} h={14}>
                  <path d="M0 1.500h16M0 5.500h10" stroke="#d0d0d0" strokeWidth="1.500" />
                  <path d="M0 9h16M0 12.500h10" stroke="#d0d0d0" strokeWidth="2.500" />
               </Icon>
            </div>
            <div className={clsx(statusGroup, "gap-[6px] pl-1")}>
               <Icon w={17} h={18}>
                  <path d="M5 1h3l2 8 6 5v2l-4-1-4-3-4 4H1v-2l5-5z" fill="#2f8df0" />
                  <circle cx="13" cy="5" r="2.500" stroke="#2f8df0" strokeWidth="1.500" />
                  <path d="M11 7l-2 3" stroke="#2f8df0" strokeWidth="1.500" />
               </Icon>
               <Icon w={17} h={18}>
                  <path d="M5 1h3l2 8 6 5v2l-4-1-4-3-4 4H1v-2l5-5z" fill="#bdbdbd" />
                  <path d="M15 1l-3 4h3l-3 4" stroke="#bdbdbd" strokeWidth="1.500" />
               </Icon>
            </div>
         </div>
      </footer>
   );
}

function SiteBadge() {
   return (
      <a
         href="#civilcn"
         className="absolute right-0 bottom-0 flex h-[115px] w-[235px] items-center justify-center gap-px bg-white text-black">
         <svg width="66" height="54" viewBox="0 0 66 54" aria-hidden="true" className="shrink-0">
            <path d="M33 12l16 7v20l-16 5z" fill="#d3d6da" />
            <path d="M49 22l6 2v10l-6 4z" fill="#dcdee1" />
            <path d="M19 14l13-5v34H19z" fill="#1f4fa3" />
            <path d="M7 28l9-3v17l-5-2z" fill="#2a5cb0" />
            <path d="M38 25l9-4v18l-9 4z" fill="#1f4fa3" />
            <path
               d="M6 24C14 7 36-2 52 3c7 3 11 8 10 16-1-7-5-11-12-13C34 2 15 10 6 24z"
               fill="#96c11f"
            />
            <path
               d="M4 28c-1 11 8 15 21 14 16-2 30-9 37-20 0 13-16 26-35 29C9 54-2 44 4 28z"
               fill="#1d449c"
            />
         </svg>
         <span className="flex flex-col items-start pt-2">
            <span className="text-[26px] leading-[26px] font-black italic">土木工程网</span>
            <span className="text-[17px] leading-[18px] font-semibold italic">www.civilcn.com</span>
         </span>
      </a>
   );
}

export default function App() {
   return (
      <div className="relative flex min-h-screen flex-col overflow-hidden bg-[#3b3b3b] font-['Open_Sans','Noto_Sans_CJK_SC',sans-serif]">
         <Header />
         <Ribbon />
         <DocumentTabs />
         <Canvas />
         <StatusBar />
         <SiteBadge />
      </div>
   );
}
